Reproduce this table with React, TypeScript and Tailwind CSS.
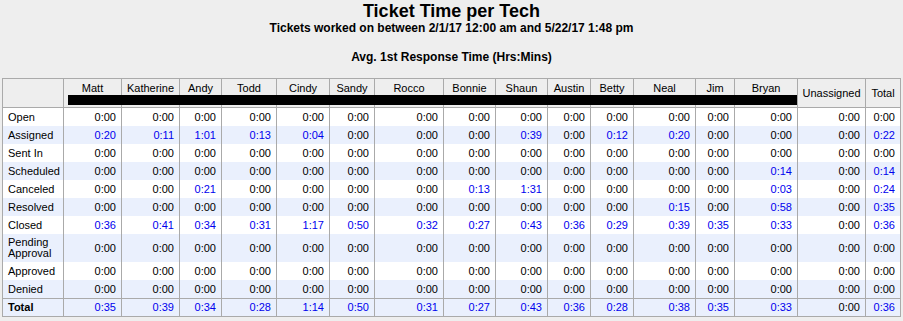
import React from "react";

// widths for columns after the label column
const colWidths = [
  "w-[58px]", "w-[58px]", "w-[42px]", "w-[55px]", "w-[53px]", "w-[45px]", "w-[69px]",
  "w-[52px]", "w-[52px]", "w-[43px]", "w-[43px]", "w-[62px]", "w-[39px]", "w-[63px]",
  "w-[68px]", "w-[35px]",
];

const names = [
  "Matt", "Katherine", "Andy", "Todd", "Cindy", "Sandy", "Rocco", "Bonnie",
  "Shaun", "Austin", "Betty", "Neal", "Jim", "Bryan",
];

const z = "0:00";
const zeros = Array(16).fill(z);

const rows: { label: string; vals: string[]; tall?: boolean }[] = [
  { label: "Open", vals: zeros },
  {
    label: "Assigned",
    vals: ["0:20", "0:11", "1:01", "0:13", "0:04", z, z, z, "0:39", z, "0:12", "0:20", z, z, z, "0:22"],
  },
  { label: "Sent In", vals: zeros },
  {
    label: "Scheduled",
    vals: [z, z, z, z, z, z, z, z, z, z, z, z, z, "0:14", z, "0:14"],
  },
  {
    label: "Canceled",
    vals: [z, z, "0:21", z, z, z, z, "0:13", "1:31", z, z, z, z, "0:03", z, "0:24"],
  },
  {
    label: "Resolved",
    vals: [z, z, z, z, z, z, z, z, z, z, z, "0:15", z, "0:58", z, "0:35"],
  },
  {
    label: "Closed",
    vals: ["0:36", "0:41", "0:34", "0:31", "1:17", "0:50", "0:32", "0:27", "0:43", "0:36", "0:29", "0:39", "0:35", "0:33", z, "0:36"],
  },
  { label: "Pending Approval", vals: zeros, tall: true },
  { label: "Approved", vals: zeros },
  { label: "Denied", vals: zeros },
];

const totals = ["0:35", "0:39", "0:34", "0:28", "1:14", "0:50", "0:31", "0:27", "0:43", "0:36", "0:28", "0:38", "0:35", "0:33", z, "0:36"];

function Val({ v }: { v: string }) {
  return <span className={v === z ? "text-black" : "text-[#0000ee]"}>{v}</span>;
}

export default function App() {
  return (
    <div className="w-[903px] h-[321px] bg-[#eeeeee] overflow-hidden font-['Liberation_Sans',Arial,sans-serif] text-black">
      <div className="pt-[2px] text-center font-bold text-[18px] leading-[19px]">Ticket Time per Tech</div>
      <div className="text-center font-bold text-[12px] leading-[15px]">
        Tickets worked on between 2/1/17 12:00 am and 5/22/17 1:48 pm
      </div>
      <div className="mt-[14px] text-center font-bold text-[12px] leading-[14px]">
        Avg. 1st Response Time (Hrs:Mins)
      </div>
      <div className="relative mt-[14px]">
        <table className="ml-[2px] w-[899px] table-fixed border-separate border-spacing-0 border border-[#aaaaaa] text-[11px] leading-[13px]">
          <thead>
            <tr className="bg-[#eeeeee]">
              <th className="w-[60px] h-[29px] border-b border-[#aaaaaa]" />
              {names.map((n, i) => (
                <th
                  key={n}
                  className={`${colWidths[i]} h-[29px] border-l border-b border-[#aaaaaa] align-top pt-[3px] font-normal text-center`}
                >
                  {n}
                </th>
              ))}
              <th className="w-[68px] h-[29px] border-l border-b border-[#aaaaaa] align-middle font-normal text-center">
                Unassigned
              </th>
              <th className="w-[35px] h-[29px] border-l border-b border-[#aaaaaa] align-middle font-normal text-center">
                Total
              </th>
            </tr>
          </thead>
          <tbody>
            {rows.map((r, ri) => (
              <tr key={r.label} className={ri % 2 === 0 ? "bg-white" : "bg-[#eaf0fd]"}>
                <td className={`${r.tall ? "h-[28px] leading-[11px]" : "h-[18px]"} pl-[5px] pr-[2px] align-middle`}>
                  {r.label}
                </td>
                {r.vals.map((v, i) => (
                  <td key={i} className="border-l border-[#aaaaaa] pr-[5px] text-right align-middle">
                    <Val v={v} />
                  </td>
                ))}
              </tr>
            ))}
            <tr className="bg-[#eaf0fd]">
              <td className="h-[18px] border-t border-[#aaaaaa] pl-[5px] font-bold align-middle">Total</td>
              {totals.map((v, i) => (
                <td key={i} className="border-l border-t border-[#aaaaaa] pr-[5px] text-right align-middle">
                  <Val v={v} />
                </td>
              ))}
            </tr>
          </tbody>
        </table>
        <div className="absolute left-[68px] top-[17px] w-[729px] h-[10px] bg-black" />
      </div>
    </div>
  );
}
